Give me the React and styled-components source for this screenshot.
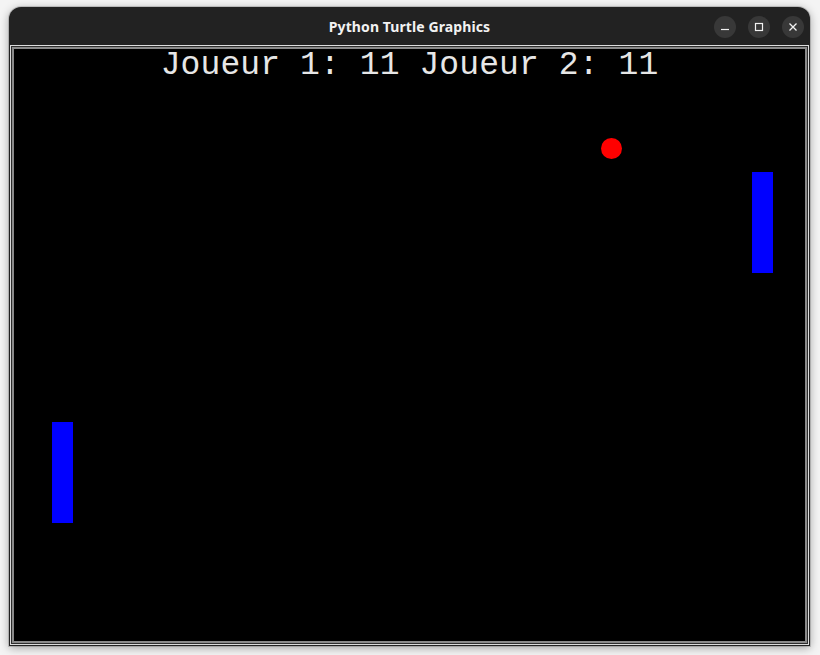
import React from "react";
import styled, { createGlobalStyle } from "styled-components";

const GlobalStyle = createGlobalStyle`
  html, body {
    margin: 0;
    padding: 0;
    background: #f4f4f4;
  }
`;

const Desktop = styled.div`
  width: 820px;
  height: 655px;
  padding: 7px 0 0 9px;
  box-sizing: border-box;
  overflow: hidden;
`;

const Window = styled.div`
  width: 801px;
  height: 639px;
  background: #222222;
  border-radius: 12px 12px 0 0;
  box-shadow: 0 2px 10px rgba(0, 0, 0, 0.35), 0 0 0 1px rgba(0, 0, 0, 0.15);
  display: flex;
  flex-direction: column;
  padding: 0 1px 1px 1px;
  box-sizing: border-box;
`;

const TitleBar = styled.div`
  height: 38px;
  flex: none;
  display: grid;
  grid-template-columns: 1fr auto 1fr;
  align-items: center;
`;

const Title = styled.div`
  grid-column: 2;
  font-family: "Noto Sans", "Open Sans", sans-serif;
  font-weight: 700;
  font-size: 14px;
  color: #f2f2f2;
  letter-spacing: 0.1px;
  padding-top: 1px;
`;

const Controls = styled.div`
  grid-column: 3;
  justify-self: end;
  display: flex;
  gap: 12px;
  padding-right: 5px;
  padding-top: 1px;
`;

const CtrlButton = styled.div`
  width: 22px;
  height: 22px;
  border-radius: 50%;
  background: #383838;
  display: flex;
  align-items: center;
  justify-content: center;
`;

const Frame = styled.div`
  flex: 1;
  display: flex;
  border: 1px solid #dcdcdc;
`;

const Well = styled.div`
  flex: 1;
  display: flex;
  border: 1px solid #2c2c2c;
`;

const Canvas = styled.div`
  flex: 1;
  position: relative;
  background: #000000;
  border: 2px solid #8a8a8a;
  overflow: hidden;
`;

const Score = styled.div`
  position: absolute;
  top: 0;
  left: 0;
  right: 0;
  text-align: center;
  font-family: "Liberation Mono", "Courier New", monospace;
  font-size: 33px;
  letter-spacing: 0.1px;
  line-height: 1;
  color: #e6e6e6;
  white-space: pre;
`;

const Paddle = styled.div`
  position: absolute;
  width: 21px;
  height: 101px;
  background: #0000ff;
`;

const Ball = styled.div`
  position: absolute;
  width: 21px;
  height: 21px;
  border-radius: 50%;
  background: #ff0000;
`;

const paddles = [
  { id: "left", x: 38, y: 373 },
  { id: "right", x: 738, y: 123 },
];

const ball = { x: 587, y: 89 };

export default function App() {
  return (
    <>
      <GlobalStyle />
      <Desktop>
        <Window>
          <TitleBar>
            <Title>Python Turtle Graphics</Title>
            <Controls>
              <CtrlButton>
                <svg width="10" height="10" viewBox="0 0 10 10">
                  <line x1="1" y1="7.5" x2="9" y2="7.5" stroke="#f2f2f2" strokeWidth="1.2" />
                </svg>
              </CtrlButton>
              <CtrlButton>
                <svg width="10" height="10" viewBox="0 0 10 10">
                  <rect x="1.5" y="1.5" width="7" height="7" fill="none" stroke="#f2f2f2" strokeWidth="1.2" />
                </svg>
              </CtrlButton>
              <CtrlButton>
                <svg width="10" height="10" viewBox="0 0 10 10">
                  <path d="M1.5 1.5 L8.5 8.5 M8.5 1.5 L1.5 8.5" stroke="#f2f2f2" strokeWidth="1.3" />
                </svg>
              </CtrlButton>
            </Controls>
          </TitleBar>
          <Frame>
            <Well>
              <Canvas>
                <Score>Joueur 1: 11 Joueur 2: 11</Score>
                <Ball style={{ left: ball.x, top: ball.y }} />
                {paddles.map((p) => (
                  <Paddle key={p.id} style={{ left: p.x, top: p.y }} />
                ))}
              </Canvas>
            </Well>
          </Frame>
        </Window>
      </Desktop>
    </>
  );
}
